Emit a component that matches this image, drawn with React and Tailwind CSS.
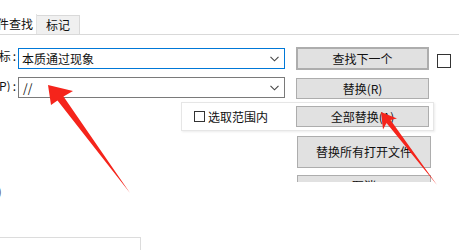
import React from 'react';

const Chevron = () => (
  <svg width="9" height="6" viewBox="0 0 9 6" className="mr-[5px]">
    <path d="M0.5 0.8 L4.5 4.8 L8.5 0.8" fill="none" stroke="#444" strokeWidth="1.1" />
  </svg>
);

const Btn = ({ children, className = '' }) => (
  <div
    className={`flex items-center justify-center bg-[#e1e1e1] border border-[#adadad] whitespace-nowrap ${className}`}
  >
    {children}
  </div>
);

const Label = ({ text }) => (
  <div className="w-[18px] flex justify-end overflow-hidden whitespace-nowrap mt-[3px] pr-[2px]">
    {text}
    <span className="ml-[2px]">:</span>
  </div>
);

const Arrows = () => (
  <svg className="absolute inset-0 pointer-events-none" width="459" height="250" viewBox="0 0 459 250">
    <polygon
      points="48,85 73,91 63.5,96.5 130,193 57.5,100.5 51,105"
      fill="#f5241b"
    />
    <polygon
      points="381,112 397,118.5 390.5,120 437,185 386.5,123 383,129.5"
      fill="#f5241b"
    />
  </svg>
);

export default function App() {
  return (
    <div className="relative w-[459px] h-[250px] overflow-hidden bg-white text-[12px] leading-none text-[#111] font-['Noto_Sans_CJK_SC','Microsoft_YaHei',sans-serif]">
      {/* tabs */}
      <div className="flex items-end h-[35px] border-b border-[#d9d9d9]">
        <div className="w-[37px] h-[20px] flex justify-end items-center overflow-hidden whitespace-nowrap pr-[3px] bg-white border-r border-[#e3e3e3]">
          文件查找
        </div>
        <div className="w-[43px] h-[19px] flex items-center justify-center bg-[#f0f0f0] border-t border-r border-[#d9d9d9]">
          标记
        </div>
      </div>

      {/* row 1 */}
      <div className="flex items-start mt-[12px] h-[23px]">
        <Label text="查找目标" />
        <div className="w-[267px] h-[21px] mt-[1px] border border-[#0078d7] flex items-center justify-between pl-[3px]">
          <span>本质通过现象</span>
          <Chevron />
        </div>
        <Btn className="ml-[11px] w-[133px] h-[23px] border-2 border-[#0078d7]">查找下一个</Btn>
        <div className="ml-[8px] mt-[7px] w-[14px] h-[14px] border border-[#333] bg-white" />
      </div>

      {/* row 2 */}
      <div className="flex items-start mt-[7px] h-[22px]">
        <Label text="替换为(P)" />
        <div className="w-[267px] h-[21px] border border-[#7a7a7a] flex items-center justify-between pl-[4px]">
          <span>//</span>
          <Chevron />
        </div>
        <Btn className="ml-[11px] mt-[1px] w-[133px] h-[21px]">替换(R)</Btn>
      </div>

      {/* row 3 panel */}
      <div className="ml-[181px] mt-[3px] w-[253px] h-[29px] flex items-center bg-white border border-[#e6e6e6] shadow-[1px_1px_2px_rgba(0,0,0,0.08)]">
        <div className="ml-[12px] w-[11px] h-[11px] border border-[#333]" />
        <span className="ml-[3px]">选取范围内</span>
        <Btn className="ml-auto mr-[4px] w-[133px] h-[21px]">全部替换(A)</Btn>
      </div>

      {/* row 4 */}
      <Btn className="ml-[297px] mt-[5px] w-[134px] h-[32px]">替换所有打开文件</Btn>

      {/* row 5 clipped */}
      <div className="ml-[297px] mt-[7px] w-[134px] h-[7px] overflow-hidden">
        <Btn className="w-[134px] h-[22px]">取消</Btn>
      </div>

      <div className="mt-[2px] h-[14px] -ml-[2px] text-[#555] text-[11px] leading-[14px]">)</div>

      <div className="mt-[39px] w-[141px] h-[20px] border-t border-r border-[#dcdcdc]" />

      <Arrows />
    </div>
  );
}
